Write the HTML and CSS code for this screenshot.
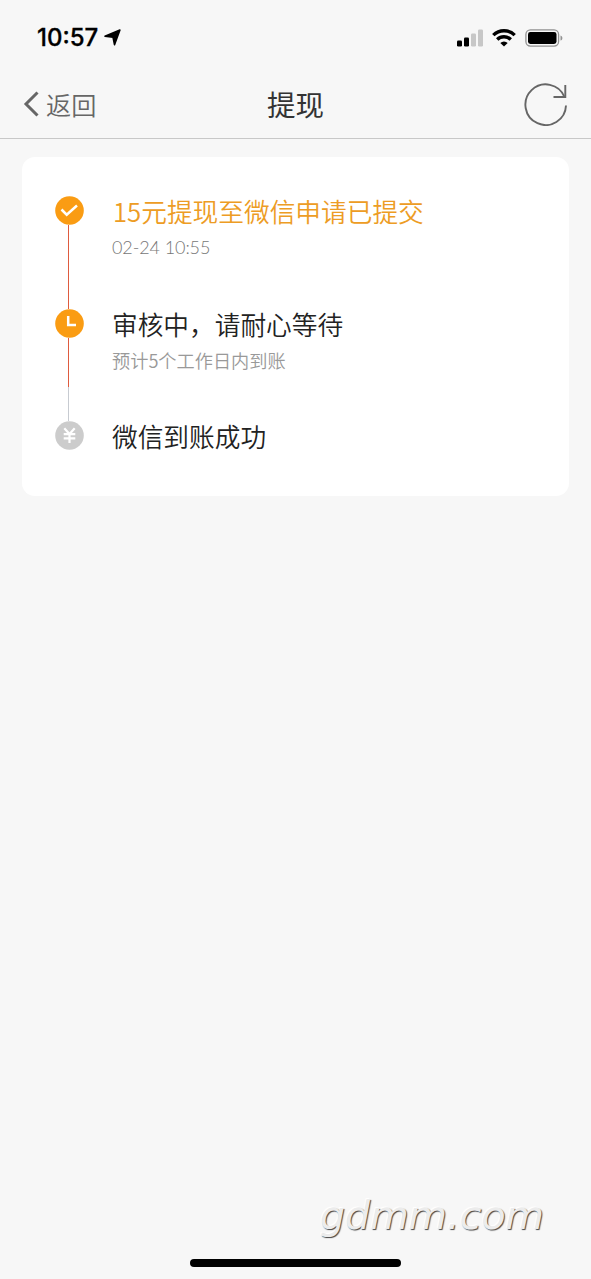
FILE: index.html
```html
<!DOCTYPE html>
<html lang="zh-CN">
<head>
<meta charset="utf-8">
<title>提现</title>
<link rel="stylesheet" href="styles.css">
</head>
<body>
<div class="screen">
  <div class="status">
    <span class="time">10:57</span>
    <svg class="location" width="17" height="17" viewBox="0 0 17 17"><path d="M1 7.300 15.900 1 10.500 15.700 9 8.200Z" stroke="#000" stroke-width="1.600" stroke-linejoin="round"/></svg>
    <div class="indicators">
      <svg width="26" height="18" viewBox="0 0 26 18"><rect x="0" y="11.500" width="5" height="6" rx="1.300"/><rect x="7" y="8.500" width="5" height="9" rx="1.300"/><g fill="#c7c7c7"><rect x="14" y="4.500" width="5" height="13" rx="1.300"/><rect x="21" y=".5" width="5" height="17" rx="1.300"/></g></svg>
      <svg width="24" height="18" viewBox="0 0 24 18"><g fill="none" stroke="#000" stroke-width="3.400"><path d="M1.300 6.100a15.300 15.300 0 0 1 21.400 0"/><path d="M5.200 10.500a9.700 9.700 0 0 1 13.600 0"/></g><path d="m12 17.500-3.700-3.600a5.300 5.300 0 0 1 7.400 0Z"/></svg>
      <svg width="38" height="18" viewBox="0 0 38 18"><rect x=".9" y=".9" width="32.700" height="16.200" rx="4.500" fill="none" stroke="#929292" stroke-width="1.300"/><rect x="3" y="3" width="28.500" height="12" rx="2.400"/><path d="M35.500 6.400c2.500.7 2.500 4.500 0 5.200Z" fill="#929292"/></svg>
    </div>
  </div>
  <header class="nav">
    <div class="back">
      <svg width="16" height="26" viewBox="0 0 16 26"><path d="M14.500 1.500 3 13 14.500 24.500" fill="none" stroke="#666" stroke-width="3"/></svg>
      <span>返回</span>
    </div>
    <h1>提现</h1>
    <svg class="refresh" width="44" height="44" viewBox="0 0 44 44"><g fill="none" stroke="#666" stroke-width="1.900"><path d="M42 23.500A20.300 20.300 0 1 1 40.500 15"/><path d="M41.300 3v12H29.500"/></g></svg>
  </header>
  <main class="card">
    <section class="step">
      <div class="rail">
        <svg class="dot" width="29" height="29" viewBox="0 0 29 29"><circle cx="14.500" cy="14.500" r="14.300" fill="#fa9c13"/><path d="m6.500 13.500 5.200 5.200L22 9.500" fill="none" stroke="#fff" stroke-width="2.500"/></svg>
        <i class="line"></i>
      </div>
      <div class="copy"><h2 class="active">15元提现至微信申请已提交</h2><p class="date">02-24 10:55</p></div>
    </section>
    <section class="step">
      <div class="rail">
        <svg class="dot" width="29" height="29" viewBox="0 0 29 29"><circle cx="14.500" cy="14.500" r="14.300" fill="#fa9c13"/><path d="M13.200 7v9h7.800" fill="none" stroke="#fff" stroke-width="2.500"/></svg>
        <i class="line pending"></i>
      </div>
      <div class="copy"><h2>审核中，请耐心等待</h2><p>预计5个工作日内到账</p></div>
    </section>
    <section class="step last">
      <div class="rail">
        <svg class="dot" width="29" height="29" viewBox="0 0 29 29"><circle cx="14.500" cy="14.500" r="14.300" fill="#ccc"/><path d="m9.300 7.300 5.200 5.700 5.200-5.700M8.700 13.200h11.600M8.700 17.300h11.600M14.500 13v9" fill="none" stroke="#fff" stroke-width="2.200"/></svg>
      </div>
      <div class="copy"><h2>微信到账成功</h2></div>
    </section>
  </main>
  <footer class="bottom">
    <div class="watermark">gdmm.com</div>
    <div class="home"></div>
  </footer>
</div>
</body>
</html>
```
FILE: styles.css
```css
* { box-sizing: border-box; }
body { margin: 0; background: #f7f7f7; font-family: "Noto Sans CJK SC", sans-serif; }
h1, h2, p { margin: 0; font-weight: 350; white-space: nowrap; }
svg { display: block; flex: none; }
.screen { display: flex; flex-direction: column; width: 591px; height: 1279px; }
.status { display: flex; align-items: center; height: 75px; padding: 0 28px 0 37px; }
.time { width: 67px; font: 500 24px/28px Inter, sans-serif; -webkit-text-stroke: .3px #000; }
.indicators { display: flex; gap: 9px; margin-left: auto; }
.nav { display: grid; grid-template-columns: 1fr auto 1fr; align-items: center; height: 64px; padding: 0 23px 5px; border-bottom: 1px solid #c8c8c8; }
.back { display: flex; align-items: center; gap: 7px; color: #666; font-size: 25.200px; font-weight: 350; line-height: 36px; }
.nav h1 { color: #333; font-size: 28.500px; font-weight: 400; line-height: 40px; }
.refresh { justify-self: end; }
.card { width: 547px; height: 339px; margin: 18px 0 0 22px; padding: 39px 32px 0 33px; border-radius: 13px; background: #fff; }
.step { display: flex; gap: 29px; height: 112.500px; }
.rail { display: flex; flex-direction: column; align-items: center; width: 29px; }
.line { flex: 1; width: 1.500px; margin-right: 2px; background: #df5b3f; }
.line.pending { background: linear-gradient(#df5b3f 49px, #c7cbd1 49px); }
.copy { margin-left: -1px; }
.copy h2 { height: 32px; color: #222; font-size: 25.700px; line-height: 30px; }
.copy h2.active { padding-left: 1px; color: #ed9c24; }
.copy p { margin-top: 6px; color: #999; font-size: 18.200px; line-height: 26px; }
.copy .date { color: #777; font-family: Lato, sans-serif; font-size: 18px; font-weight: 300; letter-spacing: -.1px; }
.bottom { display: flex; flex-direction: column; align-items: center; margin-top: auto; padding-bottom: 12px; }
.watermark { align-self: flex-end; width: 271px; height: 69px; color: #ececec; font: italic 39.500px/50px "DejaVu Sans", sans-serif; text-shadow: 1px 1px 1px #444, -1px -1px 1px #fff; }
.home { width: 211px; height: 8px; border-radius: 4px; background: #000; }
```
